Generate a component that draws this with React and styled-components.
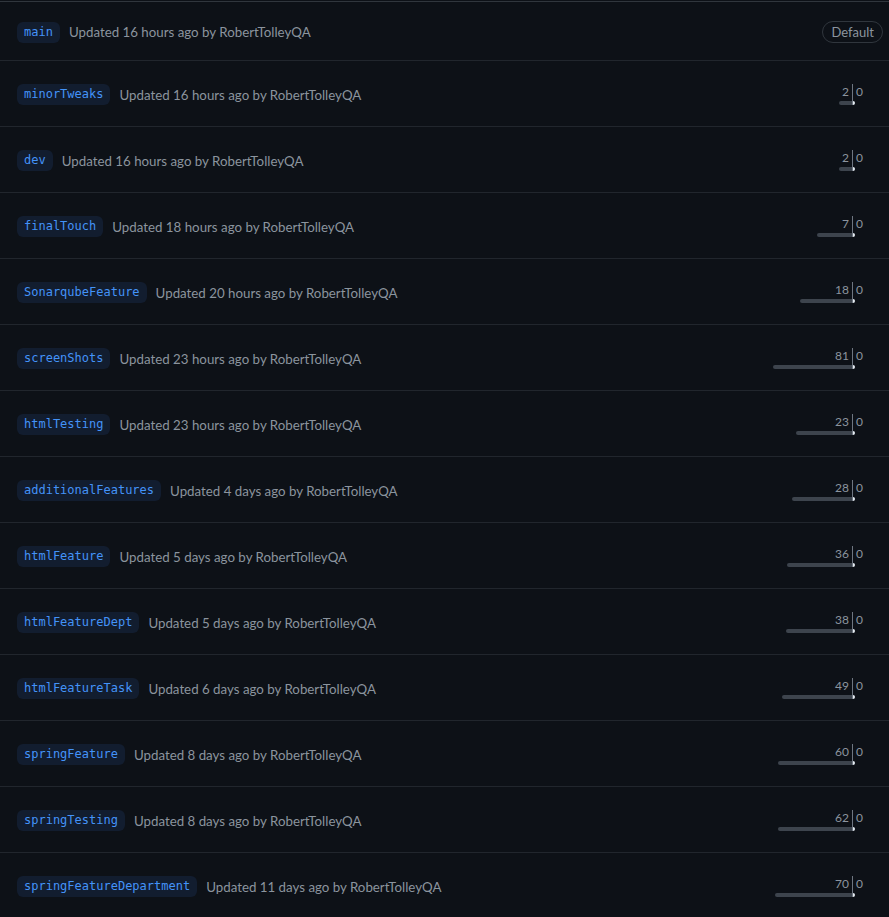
import styled, { createGlobalStyle } from "styled-components";

const GlobalStyle = createGlobalStyle`
  html, body {
    margin: 0;
    background: #0d1117;
  }
  body {
    font-family: Lato, "Noto Sans", "Liberation Sans", sans-serif;
  }
`;

const branches = [
  { name: "main", when: "16 hours ago", isDefault: true },
  { name: "minorTweaks", when: "16 hours ago", behind: 2, bar: 13 },
  { name: "dev", when: "16 hours ago", behind: 2, bar: 13 },
  { name: "finalTouch", when: "18 hours ago", behind: 7, bar: 35 },
  { name: "SonarqubeFeature", when: "20 hours ago", behind: 18, bar: 52 },
  { name: "screenShots", when: "23 hours ago", behind: 81, bar: 79 },
  { name: "htmlTesting", when: "23 hours ago", behind: 23, bar: 56 },
  { name: "additionalFeatures", when: "4 days ago", behind: 28, bar: 60 },
  { name: "htmlFeature", when: "5 days ago", behind: 36, bar: 65 },
  { name: "htmlFeatureDept", when: "5 days ago", behind: 38, bar: 66 },
  { name: "htmlFeatureTask", when: "6 days ago", behind: 49, bar: 70 },
  { name: "springFeature", when: "8 days ago", behind: 60, bar: 74 },
  { name: "springTesting", when: "8 days ago", behind: 62, bar: 74 },
  { name: "springFeatureDepartment", when: "11 days ago", behind: 70, bar: 77 },
];

export default function App() {
  return (
    <>
      <GlobalStyle />
      <List>
        {branches.map((b) => (
          <Row key={b.name} $first={b.isDefault}>
            <Info>
              <BranchName>{b.name}</BranchName>
              <Meta>
                Updated {b.when} by RobertTolleyQA
              </Meta>
            </Info>
            {b.isDefault ? (
              <DefaultLabel>Default</DefaultLabel>
            ) : (
              <Graph>
                <Behind>
                  <Count>{b.behind}</Count>
                  <BehindBar style={{ width: b.bar }} />
                </Behind>
                <Divider />
                <Ahead>
                  <Count>0</Count>
                  <AheadBar />
                </Ahead>
              </Graph>
            )}
          </Row>
        ))}
      </List>
    </>
  );
}

const List = styled.div`
  margin-top: 1px;
  border-top: 1px solid #30363d;
`;

const Row = styled.div`
  box-sizing: border-box;
  display: flex;
  align-items: center;
  justify-content: space-between;
  height: ${(p) => (p.$first ? "59px" : "66px")};
  padding: 2px 6px 0 17px;
  border-bottom: 1px solid #21262d;
`;

const Info = styled.div`
  display: flex;
  align-items: center;
  gap: 9px;
`;

const BranchName = styled.span`
  font-family: "DejaVu Sans Mono", "Liberation Mono", monospace;
  font-size: 12px;
  line-height: 17px;
  padding: 2px 7px;
  border-radius: 6px;
  background: #121d2f;
  color: #4493f8;
`;

const Meta = styled.span`
  font-size: 13.3px;
  color: #8b949e;
`;

const DefaultLabel = styled.span`
  font-size: 13px;
  font-weight: 400;
  line-height: 20px;
  padding: 0 8px;
  border: 1px solid #30363d;
  border-radius: 2em;
  color: #8b949e;
`;

const Graph = styled.div`
  display: flex;
  align-items: stretch;
  margin-top: -1px;
`;

const Behind = styled.div`
  display: flex;
  flex-direction: column;
  align-items: flex-end;
  width: 90px;
`;

const Ahead = styled.div`
  display: flex;
  flex-direction: column;
  align-items: flex-start;
  width: 30px;
`;

const Count = styled.span`
  font-size: 12px;
  line-height: 16px;
  padding: 0 3px;
  color: #8b949e;
`;

const BehindBar = styled.div`
  height: 4px;
  margin-top: 1px;
  border-radius: 6px 0 0 6px;
  background: #3d444d;
`;

const AheadBar = styled.div`
  width: 2px;
  height: 4px;
  margin-top: 1px;
  border-radius: 0 6px 6px 0;
  background: #e6edf3;
`;

const Divider = styled.div`
  width: 1px;
  background: #6e7681;
`;
